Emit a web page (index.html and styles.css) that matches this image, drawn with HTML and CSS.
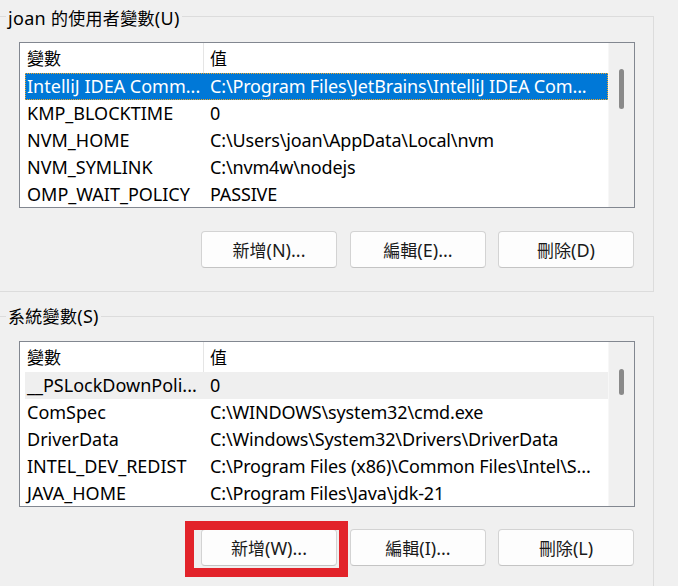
FILE: index.html
```html
<!DOCTYPE html>
<html>
<head>
<meta charset="utf-8">
<link rel="stylesheet" href="styles.css">
</head>
<body>
<div class="group g1">
  <div class="gtitle t1">joan <span class="zh">的使用者變數</span>(U)</div>
  <div class="list l1">
    <div class="lv">
      <div class="hdr"><div class="c1"><span class="zh">變數</span></div><div class="c2"><span class="zh">值</span></div></div>
      <div class="row sel"><div class="c1">IntelliJ IDEA Comm...</div><div class="c2">C:\Program Files\JetBrains\IntelliJ IDEA Com...</div></div>
      <div class="row"><div class="c1">KMP_BLOCKTIME</div><div class="c2">0</div></div>
      <div class="row"><div class="c1">NVM_HOME</div><div class="c2">C:\Users\joan\AppData\Local\nvm</div></div>
      <div class="row"><div class="c1">NVM_SYMLINK</div><div class="c2">C:\nvm4w\nodejs</div></div>
      <div class="row"><div class="c1">OMP_WAIT_POLICY</div><div class="c2">PASSIVE</div></div>
    </div>
    <div class="sb"><div class="thumb th1"></div></div>
  </div>
  <div class="btns b1">
    <div class="btn"><span class="zh">新增</span>(N)...</div>
    <div class="btn mid"><span class="zh">編輯</span>(E)...</div>
    <div class="btn"><span class="zh">刪除</span>(D)</div>
  </div>
</div>

<div class="group g2">
  <div class="gtitle t2"><span class="zh">系統變數</span>(S)</div>
  <div class="list l2">
    <div class="lv">
      <div class="hdr"><div class="c1"><span class="zh">變數</span></div><div class="c2"><span class="zh">值</span></div></div>
      <div class="row hot"><div class="c1">__PSLockDownPoli...</div><div class="c2">0</div></div>
      <div class="row"><div class="c1">ComSpec</div><div class="c2">C:\WINDOWS\system32\cmd.exe</div></div>
      <div class="row"><div class="c1">DriverData</div><div class="c2">C:\Windows\System32\Drivers\DriverData</div></div>
      <div class="row"><div class="c1">INTEL_DEV_REDIST</div><div class="c2">C:\Program Files (x86)\Common Files\Intel\S...</div></div>
      <div class="row"><div class="c1">JAVA_HOME</div><div class="c2">C:\Program Files\Java\jdk-21</div></div>
    </div>
    <div class="sb"><div class="thumb th2"></div></div>
  </div>
  <div class="btns b2">
    <div class="btn marked"><span class="zh">新增</span>(W)...<div class="mark"></div></div>
    <div class="btn mid"><span class="zh">編輯</span>(I)...</div>
    <div class="btn"><span class="zh">刪除</span>(L)</div>
  </div>
</div>
</body>
</html>
```

FILE: styles.css
```css
html, body {
  margin: 0;
  padding: 0;
}
body {
  width: 678px;
  height: 586px;
  overflow: hidden;
  background: #f0f0f0;
  font-family: "Noto Sans", "Noto Sans CJK TC", sans-serif;
  font-size: 18px;
  color: #000;
}
.zh {
  font-family: "Noto Sans CJK TC", sans-serif;
  font-size: 17px;
}
.group {
  box-sizing: border-box;
  width: 664px;
  margin-left: -10px;
  border: 1px solid #dcdcdc;
  padding-left: 28px;
}
.g1 {
  margin-top: 16px;
  padding-bottom: 23px;
}
.g2 {
  margin-top: 24px;
  height: 270px;
  border-bottom: none;
}
.gtitle {
  display: block;
  width: max-content;
  height: 20px;
  line-height: 20px;
  margin-left: -13px;
  padding: 0 2px;
  background: #f0f0f0;
  white-space: nowrap;
  letter-spacing: 0.3px;
}
.t1 { margin-top: -9px; }
.t2 { margin-top: -11px; }

.list {
  box-sizing: border-box;
  width: 616px;
  height: 166px;
  border: 1px solid #828790;
  background: #fff;
  display: flex;
  overflow: hidden;
}
.l1 { margin-top: 14px; }
.l2 { margin-top: 15px; }
.lv {
  flex: 1;
  min-width: 0;
  overflow: hidden;
}
.hdr {
  display: flex;
  height: 30px;
  line-height: 30px;
}
.hdr .c1 {
  box-sizing: border-box;
  width: 184px;
  padding-left: 7px;
  border-right: 1px solid #e5e5e5;
}
.hdr .c2 {
  padding-left: 6px;
}
.row {
  display: flex;
  height: 27px;
  line-height: 27px;
  margin-left: 5px;
  white-space: nowrap;
}
.row .c1 {
  box-sizing: border-box;
  width: 179px;
  padding-left: 2px;
  overflow: hidden;
}
.row .c2 {
  flex: 1;
  min-width: 0;
  padding-left: 6px;
  overflow: hidden;
  letter-spacing: -0.15px;
}
.row.sel {
  background: #0078d7;
  color: #fff;
  outline: 1px dotted #f5a623;
  outline-offset: -1px;
}
.row.hot {
  background: #efefef;
}
.sb {
  box-sizing: border-box;
  width: 26px;
  background: #f0f0f0;
  border-left: 1px solid #f7f7f7;
  display: flex;
  flex-direction: column;
}
.thumb {
  width: 5px;
  margin-left: 10px;
  border-radius: 3px;
  background: #8a8a8a;
}
.th1 { margin-top: 26px; height: 40px; }
.th2 { margin-top: 27px; height: 26px; }

.btns {
  display: flex;
  gap: 12px;
  margin-left: 182px;
}
.b1 { margin-top: 23px; }
.b2 { margin-top: 22px; }
.btn {
  box-sizing: border-box;
  width: 136px;
  height: 37px;
  line-height: 35px;
  text-align: center;
  background: #fdfdfd;
  border: 1px solid #d3d3d3;
  border-bottom-color: #c4c4c4;
  border-radius: 4px;
  color: #1a1a1a;
  white-space: nowrap;
}
.btn.mid {
  margin-left: 1px;
}
.marked {
  position: relative;
}
.mark {
  position: absolute;
  left: -17px;
  top: -9px;
  width: 163px;
  height: 56px;
  box-sizing: border-box;
  border: 9px solid #e2232a;
  pointer-events: none;
}
```
